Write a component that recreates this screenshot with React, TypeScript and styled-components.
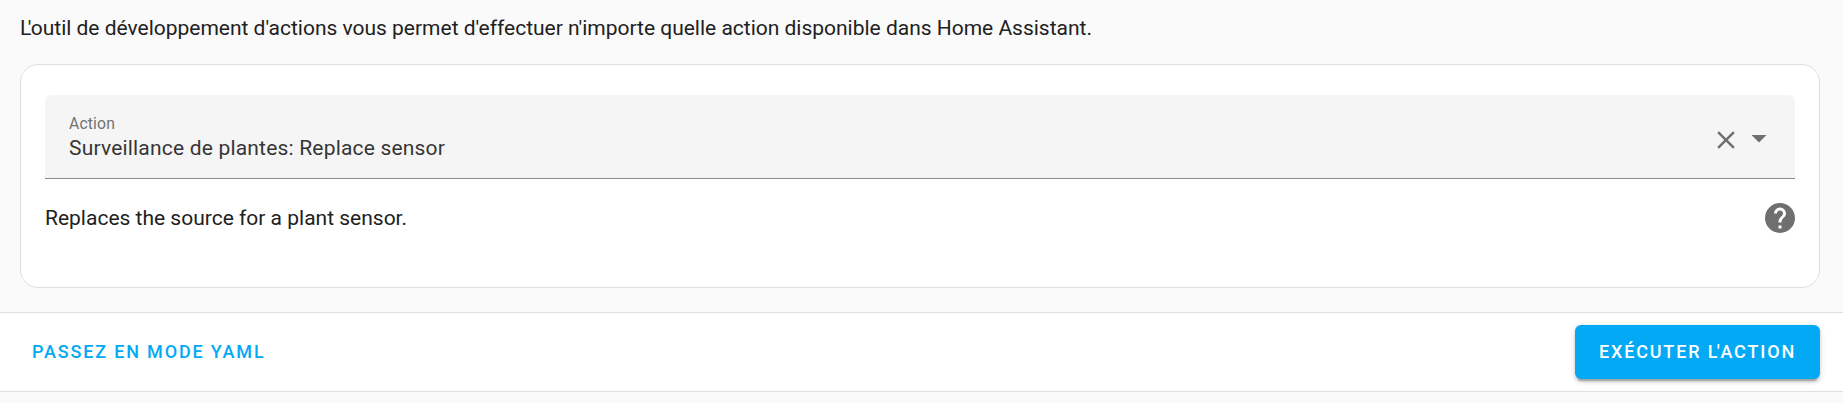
import React from "react";
import styled, { createGlobalStyle } from "styled-components";

const GlobalStyle = createGlobalStyle`
  body {
    margin: 0;
    background: #fafafa;
    color: #212121;
    font-family: Roboto, "Liberation Sans", sans-serif;
    font-size: 21px;
    line-height: 30px;
    overflow: hidden;
  }
`;

const Page = styled.div`
  display: flex;
  flex-direction: column;
  height: 403px;
`;

const Intro = styled.p`
  margin: 13px 20px 21px;
  height: 30px;
  letter-spacing: -0.01px;
`;

/* Tightens the gap between a capital L and the apostrophe after it. */
const Kern = styled.span<{ $by: number }>`
  margin-right: -${(p) => p.$by}px;
`;

const Card = styled.section`
  box-sizing: border-box;
  height: 224px;
  margin: 0 23px 24px 20px;
  padding: 30px 24px 0;
  background: #fff;
  border: 1px solid #e0e0e0;
  border-radius: 18px;
`;

const Field = styled.div`
  box-sizing: border-box;
  display: flex;
  align-items: flex-start;
  height: 84px;
  padding: 0 18px 0 24px;
  background: #f5f5f5;
  border-bottom: 1px solid #8a8a8a;
  border-radius: 6px 6px 0 0;
`;

const FieldText = styled.div`
  flex: 1;
  display: flex;
  flex-direction: column;
  padding-top: 18px;
`;

const FieldIcons = styled.div`
  display: flex;
  padding-top: 25px;
  align-items: flex-start;

  svg:first-child {
    margin-top: 5px;
  }
`;

const Label = styled.span`
  height: 21px;
  color: #737373;
  font-size: 15.75px;
  line-height: 22px;
  letter-spacing: 0.14px;
`;

const Value = styled.span`
  color: #353535;
  line-height: 28px;
  letter-spacing: 0.19px;
`;

const Icon = styled.svg<{ $size: number }>`
  display: block;
  flex: none;
  width: ${(p) => p.$size}px;
  height: ${(p) => p.$size}px;
  fill: #6f6f6f;
`;

const Description = styled.div`
  display: flex;
  align-items: center;
  justify-content: space-between;
  height: 36px;
  margin: 21px -3px 0 0;
`;

const Footer = styled.footer`
  box-sizing: border-box;
  display: flex;
  align-items: center;
  justify-content: space-between;
  height: 80px;
  padding: 0 23px 0 20px;
  background: #fff;
  border: solid #e0e0e0;
  border-width: 1px 0;
`;

const Button = styled.button<{ $raised?: boolean }>`
  height: 54px;
  border: 0;
  border-radius: 6px;
  padding: 0 ${(p) => (p.$raised ? 24 : 12)}px 2px;
  background: ${(p) => (p.$raised ? "#03a9f4" : "transparent")};
  color: ${(p) => (p.$raised ? "#fff" : "#03a9f4")};
  font: 500 18px Roboto, "Liberation Sans", sans-serif;
  letter-spacing: 1.83px;
  text-transform: uppercase;
  white-space: nowrap;
  box-shadow: ${(p) =>
    p.$raised
      ? "0 4.5px 1.5px -3px rgba(0,0,0,.2), 0 3px 3px rgba(0,0,0,.14), 0 1.5px 7.5px rgba(0,0,0,.12)"
      : "none"};
`;

export default function App() {
  return (
    <>
      <GlobalStyle />
      <Page>
        <Intro>
          <Kern $by={3.6}>L</Kern>'outil de développement d'actions vous permet d'effectuer n'importe quelle action
          disponible dans Home Assistant.
        </Intro>
        <Card>
          <Field>
            <FieldText>
              <Label>Action</Label>
              <Value>Surveillance de plantes: Replace sensor</Value>
            </FieldText>
            <FieldIcons>
              <Icon $size={30} viewBox="0 0 24 24">
                <path d="M19,6.41L17.59,5L12,10.59L6.41,5L5,6.41L10.59,12L5,17.59L6.41,19L12,13.41L17.59,19L19,17.59L13.41,12L19,6.41Z" />
              </Icon>
              <Icon $size={36} viewBox="0 0 24 24">
                <path d="M7,10L12,15L17,10H7Z" />
              </Icon>
            </FieldIcons>
          </Field>
          <Description>
            <span>Replaces the source for a plant sensor.</span>
            <Icon $size={36} viewBox="0 0 24 24">
              <path d="M15.07,11.25L14.17,12.17C13.45,12.89 13,13.5 13,15H11V14.5C11,13.39 11.45,12.39 12.17,11.67L13.41,10.41C13.78,10.05 14,9.55 14,9C14,7.89 13.1,7 12,7A2,2 0 0,0 10,9H8A4,4 0 0,1 12,5A4,4 0 0,1 16,9C16,9.88 15.64,10.67 15.07,11.25M13,19H11V17H13M12,2A10,10 0 0,0 2,12A10,10 0 0,0 12,22A10,10 0 0,0 22,12C22,6.47 17.5,2 12,2Z" />
            </Icon>
          </Description>
        </Card>
        <Footer>
          <Button>Passez en mode YAML</Button>
          <Button $raised>
            Exécuter <Kern $by={2.5}>l</Kern>'action
          </Button>
        </Footer>
      </Page>
    </>
  );
}
